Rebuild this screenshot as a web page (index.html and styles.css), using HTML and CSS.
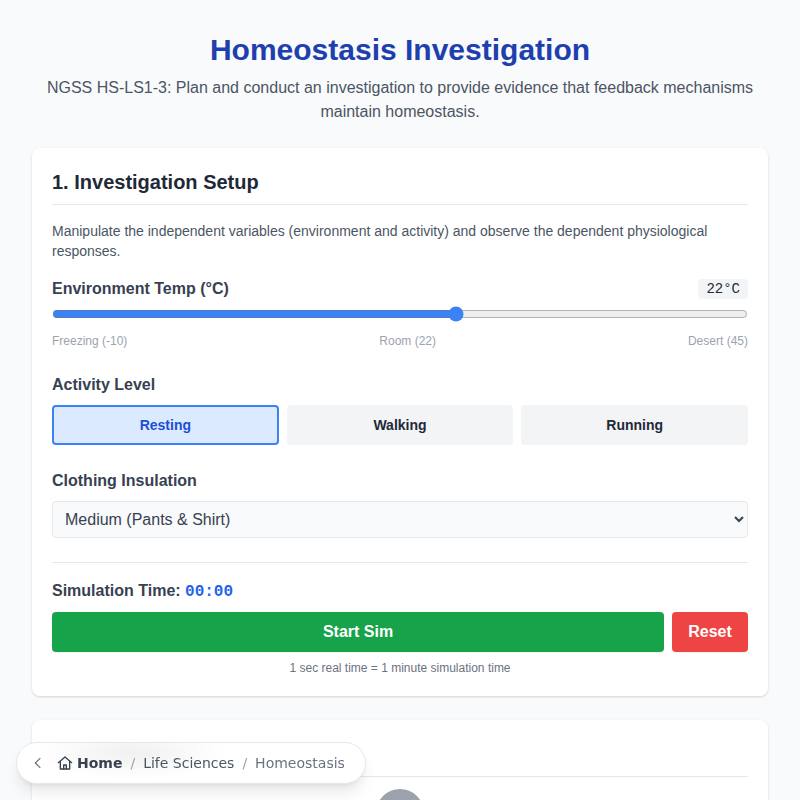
FILE: index.html
```html
<!DOCTYPE html>
<html lang="en">

<head>
  <meta charset="UTF-8">
  <meta name="viewport" content="width=device-width, initial-scale=1.0">
  <link rel="stylesheet" href="styles.css">
  <title>Homeostasis Investigation</title>
</head>

<body>
  <header class="page-header">
    <h1>Homeostasis Investigation</h1>
    <p>NGSS HS-LS1-3: Plan and conduct an investigation to provide evidence that feedback mechanisms maintain homeostasis.</p>
  </header>

  <section class="card">
    <h2>1. Investigation Setup</h2>
    <p class="intro">Manipulate the independent variables (environment and activity) and observe the dependent physiological responses.</p>

    <div class="temp-row">
      <label for="temp">Environment Temp (°C)</label>
      <span class="temp-value">22°C</span>
    </div>
    <input id="temp" class="temp-slider" type="range" min="-10" max="45" value="22">
    <div class="scale">
      <span>Freezing (-10)</span>
      <span>Room (22)</span>
      <span>Desert (45)</span>
    </div>

    <div class="field-label">Activity Level</div>
    <div class="activity">
      <button class="activity-btn active">Resting</button>
      <button class="activity-btn">Walking</button>
      <button class="activity-btn">Running</button>
    </div>

    <label class="field-label clothing-label" for="clothing">Clothing Insulation</label>
    <select id="clothing" class="clothing">
      <option>Light (Shorts &amp; T-Shirt)</option>
      <option selected>Medium (Pants &amp; Shirt)</option>
      <option>Heavy (Winter Coat)</option>
    </select>

    <div class="sim">
      <div class="sim-time">Simulation Time: <span class="clock">00:00</span></div>
      <div class="sim-buttons">
        <button class="start-btn">Start Sim</button>
        <button class="reset-btn">Reset</button>
      </div>
      <p class="sim-note">1 sec real time = 1 minute simulation time</p>
    </div>
  </section>

  <section class="card card-monitor">
    <h2>2. Live Body Data</h2>
    <div class="avatar"></div>
  </section>

  <nav class="crumbs">
    <svg class="crumb-back" width="16" height="16" viewBox="0 0 24 24" fill="none" stroke="currentColor" stroke-width="1.75" stroke-linecap="round" stroke-linejoin="round">
      <path d="M15 5l-7 7 7 7"></path>
    </svg>
    <a class="crumb-home" href="#">
      <svg width="16" height="16" viewBox="0 0 24 24" fill="none" stroke="currentColor" stroke-width="2" stroke-linecap="round" stroke-linejoin="round">
        <path d="M2 11.5L12 3l10 8.5"></path>
        <path d="M5 9.5V21h14V9.5"></path>
        <path d="M10 21v-6h4v6"></path>
      </svg>
      Home
    </a>
    <span class="crumb-sep">/</span>
    <a class="crumb-link" href="#">Life Sciences</a>
    <span class="crumb-sep">/</span>
    <span class="crumb-current">Homeostasis</span>
  </nav>
</body>

</html>
```

FILE: styles.css
```css
* {
  box-sizing: border-box;
}

body {
  font-family: 'Liberation Sans', Arial, sans-serif;
  margin: 0;
  padding: 32px;
  background-color: #f9fafb;
  color: #1f2937;
}

.page-header {
  text-align: center;
  margin-bottom: 24px;
}

.page-header h1 {
  font-size: 30px;
  line-height: 36px;
  font-weight: bold;
  color: #1e40af;
  margin: 0 0 8px;
}

.page-header p {
  font-size: 16px;
  line-height: 24px;
  color: #4b5563;
  margin: 0;
}

.card {
  background-color: white;
  border-radius: 8px;
  box-shadow: 0 1px 3px rgba(0, 0, 0, 0.1), 0 1px 2px rgba(0, 0, 0, 0.06);
  padding: 20px;
  margin-bottom: 24px;
}

.card h2 {
  font-size: 20px;
  line-height: 28px;
  font-weight: bold;
  color: #1f2937;
  margin: 0 0 16px;
  padding-bottom: 8px;
  border-bottom: 1px solid #e5e7eb;
}

.intro {
  font-size: 14px;
  line-height: 20px;
  color: #4b5563;
  margin: 0 0 16px;
}

.temp-row {
  display: flex;
  justify-content: space-between;
  align-items: center;
  margin-bottom: 4px;
}

.temp-row label,
.field-label,
.sim-time {
  font-size: 16px;
  line-height: 24px;
  font-weight: bold;
  color: #374151;
}

.temp-value {
  font-family: 'Liberation Mono', monospace;
  font-size: 14px;
  line-height: 20px;
  color: #1f2937;
  background-color: #f3f4f6;
  border-radius: 4px;
  padding: 0 8px;
}

.temp-slider {
  display: block;
  width: 100%;
  margin: 0;
  height: 18px;
  accent-color: #3b82f6;
}

.scale {
  display: flex;
  justify-content: space-between;
  font-size: 12px;
  line-height: 16px;
  color: #9ca3af;
  margin-top: 10px;
  margin-bottom: 24px;
}

.field-label {
  display: block;
  margin-bottom: 8px;
}

.activity {
  display: grid;
  grid-template-columns: repeat(3, 1fr);
  gap: 8px;
}

.activity-btn {
  font-family: inherit;
  font-size: 14px;
  font-weight: bold;
  height: 40px;
  color: #1f2937;
  background-color: #f3f4f6;
  border: none;
  border-radius: 4px;
  cursor: pointer;
}

.activity-btn.active {
  color: #1d4ed8;
  background-color: #dbeafe;
  border: 2px solid #3b82f6;
}

.clothing-label {
  margin-top: 24px;
}

.clothing {
  display: block;
  width: 100%;
  height: 37px;
  padding: 8px;
  font-family: inherit;
  font-size: 16px;
  color: #374151;
  background-color: #f9fafb;
  border: 1px solid #e5e7eb;
  border-radius: 4px;
}

.sim {
  margin-top: 24px;
  padding-top: 16px;
  border-top: 1px solid #e5e7eb;
}

.sim-time {
  margin-bottom: 8px;
}

.clock {
  font-family: 'Liberation Mono', monospace;
  color: #2563eb;
}

.sim-buttons {
  display: flex;
  gap: 8px;
}

.sim-buttons button {
  font-family: inherit;
  font-size: 16px;
  font-weight: bold;
  height: 40px;
  color: white;
  border: none;
  border-radius: 4px;
  box-shadow: 0 1px 2px rgba(0, 0, 0, 0.05);
  cursor: pointer;
}

.start-btn {
  flex: 1;
  background-color: #16a34a;
}

.reset-btn {
  width: 76px;
  background-color: #ef4444;
}

.sim-note {
  font-size: 12px;
  line-height: 16px;
  color: #6b7280;
  text-align: center;
  margin: 8px 0 0;
}

.card-monitor h2 {
  margin-bottom: 12px;
}

.avatar {
  width: 48px;
  height: 48px;
  border-radius: 50%;
  background-color: #9ca3af;
  margin: 0 auto;
}

.crumbs {
  position: fixed;
  left: 16px;
  bottom: 16px;
  height: 42px;
  display: flex;
  align-items: center;
  gap: 8px;
  padding: 0 20px 0 13px;
  font-family: 'DejaVu Sans', sans-serif;
  font-size: 14px;
  color: #4b5563;
  background: radial-gradient(ellipse 95px 26px at 115px 10px, rgba(0, 0, 0, 0.06), rgba(0, 0, 0, 0)), white;
  border: 1px solid #e5e7eb;
  border-radius: 21px;
  box-shadow: 0 10px 15px -3px rgba(0, 0, 0, 0.1), 0 4px 6px -4px rgba(0, 0, 0, 0.1);
}

.crumbs a {
  color: inherit;
  text-decoration: none;
}

.crumb-back {
  color: #6b7280;
  margin-right: 3px;
}

.crumb-home {
  display: flex;
  align-items: center;
  gap: 4px;
  font-weight: bold;
  color: #374151 !important;
}

.crumb-sep {
  color: #9ca3af;
}

.crumb-current {
  color: #6b7280;
}
```
